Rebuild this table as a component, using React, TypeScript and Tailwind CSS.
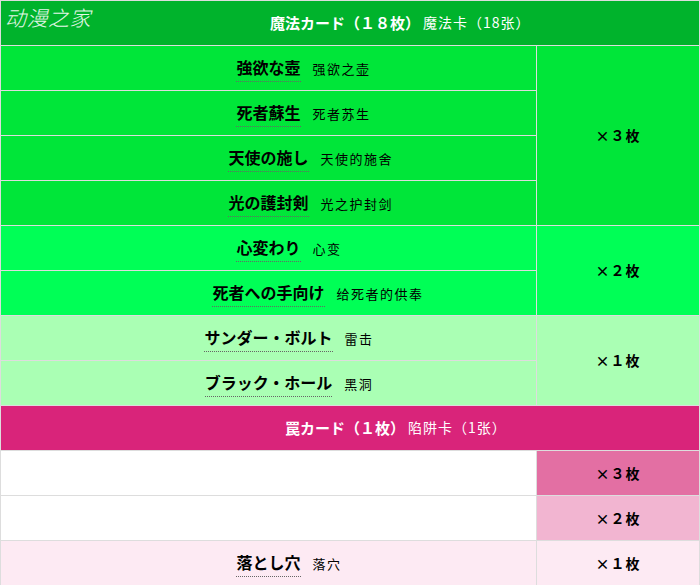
const jp = { fontFamily: '"Noto Sans CJK JP", "Noto Sans CJK SC", sans-serif' };
const cn = { fontFamily: '"Noto Sans CJK SC", sans-serif' };

function Name({ ja, zh }: { ja: string; zh: string }) {
  return (
    <span className="relative inline-block">
      <span
        className="border-b border-dotted border-[#666] pb-[2px] text-[16px] font-bold leading-[20px] text-black"
        style={jp}
      >
        {ja}
      </span>
      <span
        className="absolute left-full top-[3px] ml-[12px] whitespace-nowrap text-[13px] leading-[20px] tracking-[1.5px] text-black"
        style={cn}
      >
        {zh}
      </span>
    </span>
  );
}

function Head({ ja, zh, bg }: { ja: string; zh: string; bg: string }) {
  return (
    <div className={`col-span-2 flex items-center justify-center pr-[10px] ${bg}`}>
      <span className="relative inline-block">
        <span className="text-[15px] font-bold leading-[20px] text-white" style={jp}>
          {ja}
        </span>
        <span
          className="absolute left-full top-[1px] ml-[3px] whitespace-nowrap text-[14px] leading-[20px] tracking-[1px] text-white"
          style={cn}
        >
          {zh}
        </span>
      </span>
    </div>
  );
}

function Count({ n, bg, span }: { n: string; bg: string; span: string }) {
  return (
    <div className={`flex items-center justify-center ${bg} ${span}`}>
      <span className="text-[14px] font-bold tracking-[1px] text-black" style={jp}>
        ×{n}枚
      </span>
    </div>
  );
}

const magic = [
  { ja: '強欲な壺', zh: '强欲之壶', bg: 'bg-[#00e639]' },
  { ja: '死者蘇生', zh: '死者苏生', bg: 'bg-[#00e639]' },
  { ja: '天使の施し', zh: '天使的施舍', bg: 'bg-[#00e639]' },
  { ja: '光の護封剣', zh: '光之护封剑', bg: 'bg-[#00e639]' },
  { ja: '心変わり', zh: '心变', bg: 'bg-[#00ff56]' },
  { ja: '死者への手向け', zh: '给死者的供奉', bg: 'bg-[#00ff56]' },
  { ja: 'サンダー・ボルト', zh: '雷击', bg: 'bg-[#aaffb4]' },
  { ja: 'ブラック・ホール', zh: '黑洞', bg: 'bg-[#aaffb4]' },
];

export default function App() {
  return (
    <div className="relative h-[585px] w-[700px] overflow-hidden bg-white">
      <div className="grid grid-cols-[535px_162px] grid-rows-[repeat(13,44px)] gap-px border-x border-[#dddddd] bg-[#dddddd] pt-px">
        <Head ja="魔法カード（１８枚）" zh="魔法卡（18张）" bg="bg-[#00b32c]" />

        <div className={`flex items-center justify-center ${magic[0].bg}`}>
          <Name ja={magic[0].ja} zh={magic[0].zh} />
        </div>
        <Count n="３" bg="bg-[#00e639]" span="row-span-4" />
        {magic.slice(1, 4).map((m) => (
          <div key={m.ja} className={`flex items-center justify-center ${m.bg}`}>
            <Name ja={m.ja} zh={m.zh} />
          </div>
        ))}

        <div className={`flex items-center justify-center ${magic[4].bg}`}>
          <Name ja={magic[4].ja} zh={magic[4].zh} />
        </div>
        <Count n="２" bg="bg-[#00ff56]" span="row-span-2" />
        <div className={`flex items-center justify-center ${magic[5].bg}`}>
          <Name ja={magic[5].ja} zh={magic[5].zh} />
        </div>

        <div className={`flex items-center justify-center ${magic[6].bg}`}>
          <Name ja={magic[6].ja} zh={magic[6].zh} />
        </div>
        <Count n="１" bg="bg-[#aaffb4]" span="row-span-2" />
        <div className={`flex items-center justify-center ${magic[7].bg}`}>
          <Name ja={magic[7].ja} zh={magic[7].zh} />
        </div>

        <Head ja="罠カード（１枚）" zh="陷阱卡（1张）" bg="bg-[#d9247a]" />

        <div className="bg-white" />
        <Count n="３" bg="bg-[#e36fa3]" span="" />
        <div className="bg-white" />
        <Count n="２" bg="bg-[#f2b5d1]" span="" />
        <div className="flex items-center justify-center bg-[#fdeaf3]">
          <Name ja="落とし穴" zh="落穴" />
        </div>
        <Count n="１" bg="bg-[#fdeaf3]" span="" />
      </div>

      <div
        className="absolute left-[5px] top-[3px] text-[21px] font-light italic leading-[28px] tracking-[0.5px] text-white/90"
        style={cn}
      >
        动漫之家
      </div>
    </div>
  );
}
